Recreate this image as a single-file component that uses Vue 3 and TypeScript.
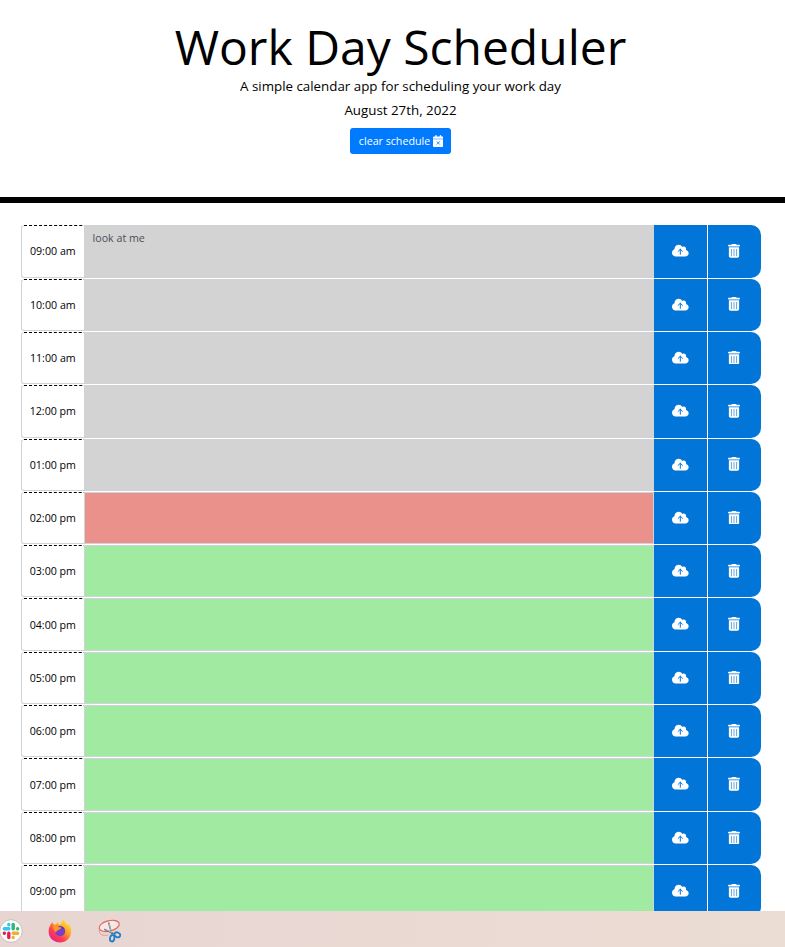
<script setup lang="ts">
type Period = 'past' | 'present' | 'future'

interface Block {
  label: string
  period: Period
  text: string
}

const currentHour = 14

const blocks: Block[] = Array.from({ length: 13 }, (_, i) => {
  const hour = i + 9
  const display = String(hour > 12 ? hour - 12 : hour).padStart(2, '0')
  return {
    label: `${display}:00 ${hour < 12 ? 'am' : 'pm'}`,
    period: hour < currentHour ? 'past' : hour === currentHour ? 'present' : 'future',
    text: hour === 9 ? 'look at me' : '',
  }
})
</script>

<template>
  <div class="screen">
    <main class="page">
      <header class="hero">
        <h1 class="title">Work Day Scheduler</h1>
        <p class="lead">A simple calendar app for scheduling your work day</p>
        <p class="lead">August 27th, 2022</p>
        <button class="clear" type="button">
          <span>clear schedule</span>
          <svg class="calendar" viewBox="0 0 448 512" aria-hidden="true">
            <path
              d="M128 0c17.700 0 32 14.300 32 32V64H288V32c0-17.700 14.300-32 32-32s32 14.300 32 32V64h48c26.500 0 48 21.500 48 48v48H0V112C0 85.500 21.500 64 48 64H96V32c0-17.700 14.300-32 32-32zM0 180H448V464c0 26.500-21.500 48-48 48H48c-26.500 0-48-21.500-48-48V180z"
            />
            <path class="cross" d="M160 270l128 136M288 270l-128 136" />
          </svg>
        </button>
      </header>

      <section class="schedule">
        <div v-for="block in blocks" :key="block.label" class="row">
          <div class="hour">{{ block.label }}</div>
          <div class="entry" :class="block.period">{{ block.text }}</div>
          <button class="action" type="button" aria-label="Save">
            <svg class="cloud" viewBox="0 0 640 512" aria-hidden="true">
              <path
                d="M144 480C64.500 480 0 415.500 0 336c0-62.800 40.200-116.200 96.200-135.900c-.1-2.700-.2-5.400-.2-8.100c0-88.400 71.600-160 160-160c59.300 0 111 32.200 138.700 80.200C409.900 102 428.300 96 448 96c53 0 96 43 96 96c0 12.200-2.300 23.800-6.400 34.600C596 238.400 640 290.100 640 352c0 70.700-57.300 128-128 128H144z"
              />
              <path class="arrow" d="M320 396V200M236 284l84-84 84 84" />
            </svg>
          </button>
          <button class="action last" type="button" aria-label="Delete">
            <svg class="trash" viewBox="0 0 448 512" aria-hidden="true">
              <path
                d="M135.200 17.700L128 32H32C14.300 32 0 46.300 0 64S14.300 96 32 96H416c17.700 0 32-14.300 32-32s-14.300-32-32-32H320l-7.200-14.300C307.400 6.800 296.300 0 284.200 0H163.800c-12.100 0-23.200 6.800-28.600 17.700zM416 120H32V448c0 35.300 28.700 64 64 64H352c35.300 0 64-28.700 64-64V120z"
              />
              <path class="slots" d="M128 204V436M224 204V436M320 204V436" />
            </svg>
          </button>
        </div>
      </section>
    </main>

    <footer class="taskbar">
      <svg class="app slack" viewBox="0 0 24 24" aria-hidden="true">
        <circle cx="12" cy="12" r="11.300" fill="#fbfbfa" stroke="#bdb5b3" stroke-width=".8" />
        <g fill="none" stroke-width="3.400" stroke-linecap="round">
          <path stroke="#36c5f0" d="M5.300 9.700h4.500M9.800 5.500v.2" />
          <path stroke="#2eb67d" d="M14.200 5.500v4.300M18.600 9.700h.1" />
          <path stroke="#ecb22e" d="M14.200 14.200h4.500M14.200 18.500v.1" />
          <path stroke="#e01e5a" d="M9.800 14.200v4.400M5.300 14.200h.1" />
        </g>
      </svg>
      <svg class="app firefox" viewBox="0 0 24 24" aria-hidden="true">
        <defs>
          <linearGradient id="flame" x1=".85" y1=".1" x2=".2" y2=".9">
            <stop offset="0" stop-color="#ffe53b" />
            <stop offset=".4" stop-color="#ff9a22" />
            <stop offset=".7" stop-color="#ff4052" />
            <stop offset="1" stop-color="#e82382" />
          </linearGradient>
        </defs>
        <path
          fill="url(#flame)"
          d="M2.800 5.200 4.300 3l1.200 2.600 2.400-.2L10.300 3l.3 2.800 2.700-.6C13.300 3 14.300 1.200 15.900.2c.3 2.600 3 4 4.100 6.200l.4-2.200c2.200 2.600 3.300 6.200 2.700 9.800-.8 5.600-5.400 9.500-11.100 9.500S1 19.300.7 13.500C.5 10 1.300 7.200 2.800 5.200z"
        />
        <circle cx="12.200" cy="12.200" r="5" fill="#7740c8" />
        <path fill="#5936a3" d="M10.500 7.500c2.500-.8 5.400.3 6.400 3.200-2-1.400-4.100-1.400-6.400-.6z" />
        <path fill="#ff9727" d="M5.200 6.700c2-.8 4.100-.2 5.300 1.200l3.100.7c-.3 1.500-2 1.600-3 2.200-.8 1-2 .9-2.600 2.400-1.800-1.200-3.200-3.600-2.800-6.500z" />
      </svg>
      <svg class="app snip" viewBox="0 0 24 24" aria-hidden="true">
        <g transform="rotate(-14 12 7)">
          <ellipse cx="12.200" cy="7" rx="10.300" ry="5.200" fill="#f6e8e5" stroke="#e66260" stroke-width="1.100" />
          <path d="M1.600 8.500C0 12.500 3.500 15.500 9 15.500" fill="none" stroke="#e7908c" stroke-width=".8" />
        </g>
        <path d="M11.600 3.500l3.300 12M7.300 10.300l9.500 4.500" fill="none" stroke="#69777d" stroke-width="1.500" />
        <path d="M12 4.500l2.300 8.500M8.500 10.400l6.500 3" fill="none" stroke="#d6dddd" stroke-width=".6" />
        <g fill="none" stroke="#1e81c8" stroke-width="1.800">
          <ellipse cx="15.200" cy="19.300" rx="2.200" ry="3.200" transform="rotate(12 15.200 19.300)" />
          <ellipse cx="20.300" cy="15.800" rx="3" ry="2.300" transform="rotate(28 20.300 15.800)" />
        </g>
      </svg>
    </footer>
  </div>
</template>

<style>
body {
  margin: 0;
  background: #fff;
}
</style>

<style scoped>
.screen {
  display: flex;
  flex-direction: column;
  height: 947px;
  overflow: hidden;
  font-family: 'Open Sans', sans-serif;
  color: #000;
}

.page {
  flex: 1;
  min-height: 0;
  overflow: hidden;
}

.hero {
  box-sizing: border-box;
  display: flex;
  flex-direction: column;
  align-items: center;
  height: 203px;
  padding: 19px 0 0 16px;
  border-bottom: 6px solid #000;
}

.title {
  margin: 0;
  font-size: 48px;
  font-weight: 400;
  line-height: 55px;
  white-space: nowrap;
}

.lead {
  margin: 0;
  font-size: 13.33px;
  line-height: 24px;
}

.clear {
  display: flex;
  align-items: center;
  justify-content: center;
  gap: 2.500px;
  width: 101px;
  height: 26px;
  margin-top: 6px;
  padding: 0 0 0 1px;
  border: 0;
  border-radius: 3px;
  background: #007bff;
  color: #fff;
  font: 10.67px/16px 'Open Sans', sans-serif;
}

svg {
  display: block;
  fill: currentColor;
}

.calendar {
  width: 10.500px;
  height: 12px;
}

.cross {
  stroke: #007bff;
  stroke-width: 36;
}

.schedule {
  display: flex;
  flex-direction: column;
  gap: 1px;
  width: 740px;
  padding: 22.200px 0 0 21px;
}

.row {
  display: grid;
  grid-template-columns: 63px 568px 1fr 1fr;
  column-gap: 1px;
  flex: none;
  height: 52.333px;
}

.hour {
  box-sizing: border-box;
  display: flex;
  align-items: center;
  justify-content: center;
  border: 1px solid #ced4da;
  border-top: 1px dashed #000;
  border-right: 0;
  border-radius: 3px 0 0 3px;
  margin-right: -1px;
  padding-right: 1.400px;
  font-size: 10.67px;
}

.entry {
  box-sizing: border-box;
  margin: 0 -1px;
  padding: 4px 7.600px;
  border: 1px solid #ced4da;
  color: #495057;
  font-size: 10.67px;
  line-height: 16px;
}

.past {
  background: #d3d3d3;
  border-color: #d0d2d5;
}

.present {
  background: #eb918b;
}

.future {
  background: #a1eaa1;
}

.action {
  display: flex;
  align-items: center;
  justify-content: center;
  padding: 0 0 1px;
  border: 0;
  background: #0275d8;
  color: #fff;
}

.last {
  padding-right: 1px;
  border-radius: 0 10px 10px 0;
}

.cloud {
  width: 16.670px;
  height: 13.330px;
}

.arrow {
  fill: none;
  stroke: #0275d8;
  stroke-width: 38;
  stroke-linecap: round;
}

.trash {
  width: 12px;
  height: 13.700px;
}

.slots {
  stroke: #0275d8;
  stroke-width: 24;
  stroke-linecap: round;
}

.taskbar {
  display: flex;
  align-items: center;
  flex: none;
  box-sizing: border-box;
  height: 36px;
  padding-top: 4px;
  background: linear-gradient(90deg, #e7d5d2, #ecddd4);
}

.app {
  width: 24px;
  height: 24px;
}

.slack {
  margin-left: -1px;
}

.firefox {
  margin-left: 25px;
}

.snip {
  margin-left: 25px;
}
</style>
